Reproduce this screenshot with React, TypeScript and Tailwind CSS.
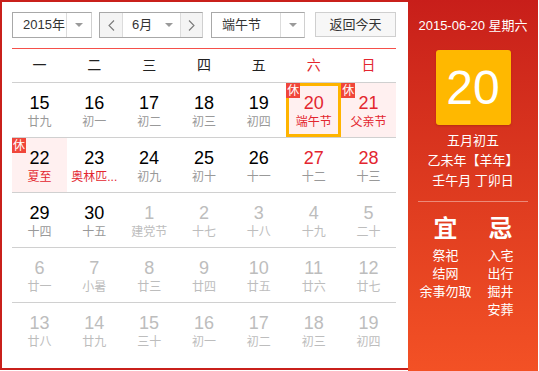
type Day = {
  n: number;
  sub: string;
  other?: boolean;
  redNum?: boolean;
  redSub?: boolean;
  rest?: boolean;
  pink?: boolean;
  today?: boolean;
};

const weeks: Day[][] = [
  [
    { n: 15, sub: "廿九" },
    { n: 16, sub: "初一" },
    { n: 17, sub: "初二" },
    { n: 18, sub: "初三" },
    { n: 19, sub: "初四" },
    { n: 20, sub: "端午节", redNum: true, redSub: true, rest: true, pink: true, today: true },
    { n: 21, sub: "父亲节", redNum: true, redSub: true, rest: true, pink: true },
  ],
  [
    { n: 22, sub: "夏至", redSub: true, rest: true, pink: true },
    { n: 23, sub: "奥林匹...", redSub: true },
    { n: 24, sub: "初九" },
    { n: 25, sub: "初十" },
    { n: 26, sub: "十一" },
    { n: 27, sub: "十二", redNum: true },
    { n: 28, sub: "十三", redNum: true },
  ],
  [
    { n: 29, sub: "十四" },
    { n: 30, sub: "十五" },
    { n: 1, sub: "建党节", other: true },
    { n: 2, sub: "十七", other: true },
    { n: 3, sub: "十八", other: true },
    { n: 4, sub: "十九", other: true },
    { n: 5, sub: "二十", other: true },
  ],
  [
    { n: 6, sub: "廿一", other: true },
    { n: 7, sub: "小暑", other: true },
    { n: 8, sub: "廿三", other: true },
    { n: 9, sub: "廿四", other: true },
    { n: 10, sub: "廿五", other: true },
    { n: 11, sub: "廿六", other: true },
    { n: 12, sub: "廿七", other: true },
  ],
  [
    { n: 13, sub: "廿八", other: true },
    { n: 14, sub: "廿九", other: true },
    { n: 15, sub: "三十", other: true },
    { n: 16, sub: "初一", other: true },
    { n: 17, sub: "初二", other: true },
    { n: 18, sub: "初三", other: true },
    { n: 19, sub: "初四", other: true },
  ],
];

const weekdays = ["一", "二", "三", "四", "五", "六", "日"];

function Caret() {
  return <span className="block h-0 w-0 border-x-[4px] border-t-[4px] border-x-transparent border-t-[#9a9a9a]" />;
}

function Chevron({ dir }: { dir: "l" | "r" }) {
  return (
    <svg width="7" height="11" viewBox="0 0 7 11" fill="none" stroke="#7a7a7a" strokeWidth="1.1">
      {dir === "l" ? <polyline points="6,0.5 1,5.5 6,10.5" /> : <polyline points="1,0.5 6,5.5 1,10.5" />}
    </svg>
  );
}

function Cell({ d }: { d: Day }) {
  const numColor = d.other ? "text-[#bdbdbd]" : d.redNum ? "text-[#e3262f]" : "text-black";
  const subColor = d.other ? "text-[#bdbdbd]" : d.redSub ? "text-[#e3262f]" : "text-[#999]";
  return (
    <div
      className={`relative flex h-[54px] flex-col items-center ${d.pink ? "bg-[#fff0f0]" : ""} ${
        d.today ? "border-[3px] border-[#ffb400] pt-[7px]" : "pt-[10px]"
      }`}
    >
      {d.rest && (
        <span
          className={`absolute flex h-[15px] w-[14px] items-center justify-center bg-[#f0463a] text-[12px] leading-none text-white ${
            d.today ? "-left-[3px] -top-[3px]" : "left-0 top-0"
          }`}
        >
          休
        </span>
      )}
      <span className={`text-[18px] leading-[20px] ${numColor}`}>{d.n}</span>
      <span className={`whitespace-nowrap text-[12px] leading-[18px] ${subColor}`}>{d.sub}</span>
    </div>
  );
}

export default function App() {
  return (
    <div className="flex h-[371px] w-[539px] items-start bg-white font-['Liberation_Sans','Noto_Sans_CJK_SC',sans-serif]">
      <div className="h-[370px] w-[408px] border-2 border-r-0 border-[#c9201b] pl-[10px] pr-[12px] pt-[10px]">
        {/* toolbar */}
        <div className="flex h-[26px] text-[13px] text-[#333]">
          <div className="flex w-[80px] border border-[#a8a8a8] border-r-[#d0d0d0]">
            <div className="flex flex-1 items-center pl-[10px]">2015年</div>
            <div className="flex w-[25px] items-center justify-center border-l border-[#dcdcdc]">
              <Caret />
            </div>
          </div>
          <div className="ml-[7px] flex w-[104px] border border-[#a8a8a8] border-r-[#d0d0d0]">
            <div className="flex w-[23px] items-center justify-center border-r border-[#dcdcdc] bg-[#f4f4f4]">
              <Chevron dir="l" />
            </div>
            <div className="flex flex-1 items-center justify-between pl-[9px] pr-[7px]">
              <span>6月</span>
              <Caret />
            </div>
            <div className="flex w-[22px] items-center justify-center border-l border-[#dcdcdc] bg-[#f4f4f4]">
              <Chevron dir="r" />
            </div>
          </div>
          <div className="ml-[8px] flex w-[94px] border border-[#a8a8a8] border-r-[#d0d0d0]">
            <div className="flex flex-1 items-center pl-[10px]">端午节</div>
            <div className="flex w-[24px] items-center justify-center border-l border-[#dcdcdc]">
              <Caret />
            </div>
          </div>
          <div className="ml-[10px] flex h-[25px] w-[81px] items-center justify-center border border-[#cfcfcf] bg-[#f7f7f7]">
            返回今天
          </div>
        </div>

        <div className="mt-[10px] h-px bg-[#f5504a]" />

        <div className="grid h-[33px] grid-cols-7 items-center text-center text-[14px]">
          {weekdays.map((w, i) => (
            <span key={w} className={i >= 5 ? "text-[#e3262f]" : "text-[#222]"}>
              {w}
            </span>
          ))}
        </div>

        {weeks.map((row, r) => (
          <div key={r} className="grid grid-cols-7 border-t border-[#d0d0d0]">
            {row.map((d, i) => (
              <Cell key={i} d={d} />
            ))}
          </div>
        ))}
      </div>

      <div className="flex h-[371px] w-[130px] flex-col items-center bg-linear-to-b from-[#c81e1a] to-[#f35125] pt-[18px] text-white">
        <div className="text-[13px] leading-[16px]">2015-06-20 星期六</div>
        <div className="mt-[16px] flex h-[75px] w-[75px] items-center justify-center rounded-[3px] bg-[#ffb800] text-[48px] leading-none shadow-[0_1px_2px_rgba(120,30,0,0.35)]">
          20
        </div>
        <div className="mt-[6px] text-center text-[13px] leading-[20px]">
          <div>五月初五</div>
          <div>乙未年【羊年】</div>
          <div>壬午月 丁卯日</div>
        </div>
        <div className="mt-[10px] h-px w-[110px] bg-white/40" />
        <div className="mt-[12px] grid w-[110px] grid-cols-2 text-center">
          <div className="text-[24px] font-bold leading-[30px]">宜</div>
          <div className="text-[24px] font-bold leading-[30px]">忌</div>
          <div className="mt-[3px] text-[13px] leading-[18px]">
            <div>祭祀</div>
            <div>结网</div>
            <div className="whitespace-nowrap">余事勿取</div>
          </div>
          <div className="mt-[3px] text-[13px] leading-[18px]">
            <div>入宅</div>
            <div>出行</div>
            <div>掘井</div>
            <div>安葬</div>
          </div>
        </div>
      </div>
    </div>
  );
}
